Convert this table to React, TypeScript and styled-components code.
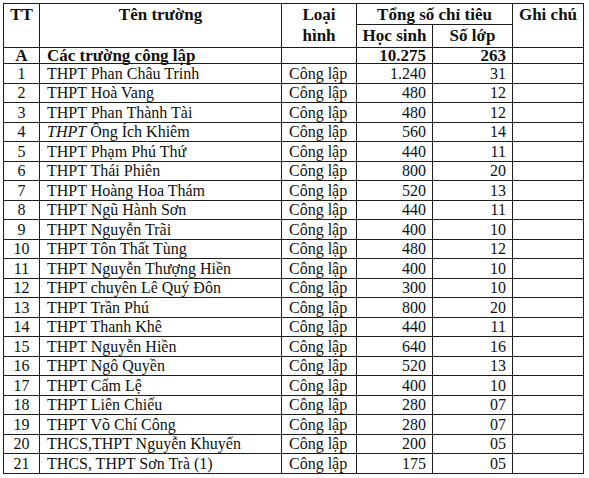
import React from "react";
import styled, { createGlobalStyle } from "styled-components";

type School = {
  no: string;
  name: React.ReactNode;
  students: string;
  classes: string;
};

const schools: School[] = [
  { no: "1", name: "THPT Phan Châu Trinh", students: "1.240", classes: "31" },
  { no: "2", name: "THPT Hoà Vang", students: "480", classes: "12" },
  { no: "3", name: "THPT Phan Thành Tài", students: "480", classes: "12" },
  { no: "4", name: <><i>THPT</i> Ông Ích Khiêm</>, students: "560", classes: "14" },
  { no: "5", name: "THPT Phạm Phú Thứ", students: "440", classes: "11" },
  { no: "6", name: "THPT Thái Phiên", students: "800", classes: "20" },
  { no: "7", name: "THPT Hoàng Hoa Thám", students: "520", classes: "13" },
  { no: "8", name: "THPT Ngũ Hành Sơn", students: "440", classes: "11" },
  { no: "9", name: "THPT Nguyễn Trãi", students: "400", classes: "10" },
  { no: "10", name: "THPT Tôn Thất Tùng", students: "480", classes: "12" },
  { no: "11", name: "THPT Nguyễn Thượng Hiền", students: "400", classes: "10" },
  { no: "12", name: "THPT chuyên Lê Quý Đôn", students: "300", classes: "10" },
  { no: "13", name: "THPT Trần Phú", students: "800", classes: "20" },
  { no: "14", name: "THPT Thanh Khê", students: "440", classes: "11" },
  { no: "15", name: "THPT Nguyễn Hiền", students: "640", classes: "16" },
  { no: "16", name: "THPT Ngô Quyền", students: "520", classes: "13" },
  { no: "17", name: "THPT Cẩm Lệ", students: "400", classes: "10" },
  { no: "18", name: "THPT Liên Chiểu", students: "280", classes: "07" },
  { no: "19", name: "THPT Võ Chí Công", students: "280", classes: "07" },
  { no: "20", name: "THCS,THPT Nguyễn Khuyến", students: "200", classes: "05" },
  { no: "21", name: "THCS, THPT Sơn Trà (1)", students: "175", classes: "05" },
];

export const App: React.FC = () => {
  return (
    <>
      <GlobalStyle />
      <Page>
        <Grid>
          <Head $rows="1 / 3">TT</Head>
          <Head $rows="1 / 3">Tên trường</Head>
          <Head $rows="1 / 3">
            Loại
            <br />
            hình
          </Head>
          <Head $cols="4 / 6">Tổng số chỉ tiêu</Head>
          <Head $rows="1 / 3" $cols="6">
            Ghi chú
          </Head>
          <Head $cols="4">Học sinh</Head>
          <Head $cols="5">Số lớp</Head>

          <Cell $align="center" $bold>
            <span>A</span>
          </Cell>
          <Cell $bold>
            <span>Các trường công lập</span>
          </Cell>
          <Cell />
          <Cell $align="right" $bold>
            <span>10.275</span>
          </Cell>
          <Cell $align="right" $bold>
            <span>263</span>
          </Cell>
          <Cell />

          {schools.map((s) => (
            <React.Fragment key={s.no}>
              <Cell $align="center">
                <span>{s.no}</span>
              </Cell>
              <Cell>
                <span>{s.name}</span>
              </Cell>
              <Cell>
                <span>Công lập</span>
              </Cell>
              <Cell $align="right">
                <span>{s.students}</span>
              </Cell>
              <Cell $align="right">
                <span>{s.classes}</span>
              </Cell>
              <Cell />
            </React.Fragment>
          ))}
        </Grid>
      </Page>
    </>
  );
};

const GlobalStyle = createGlobalStyle`
  html, body {
    margin: 0;
    padding: 0;
    background: #fff;
  }
  body {
    font-family: "Liberation Serif", "Times New Roman", serif;
    color: #111;
  }
`;

const Page = styled.div`
  width: 589px;
  height: 478px;
  padding: 3px 0 0 3px;
  box-sizing: border-box;
  background: #fff;
`;

const Grid = styled.div`
  display: grid;
  grid-template-columns: 36px 242px 75px 76px 80px 71px;
  grid-template-rows: 21px 23px 16px repeat(21, 19.5px);
  width: max-content;
  border-top: 1px solid #1e1e1e;
  border-left: 1px solid #1e1e1e;
  font-size: 16px;
`;

const Head = styled.div<{ $rows?: string; $cols?: string }>`
  grid-row: ${(p) => p.$rows ?? "auto"};
  grid-column: ${(p) => p.$cols ?? "auto"};
  border-right: 1px solid #1e1e1e;
  border-bottom: 1px solid #1e1e1e;
  font-size: 17px;
  font-weight: bold;
  text-align: center;
  line-height: 21px;
  white-space: nowrap;
`;

const Cell = styled.div<{ $align?: "left" | "center" | "right"; $bold?: boolean }>`
  display: flex;
  align-items: center;
  justify-content: ${(p) =>
    p.$align === "center" ? "center" : p.$align === "right" ? "flex-end" : "flex-start"};
  padding: ${(p) => (p.$align === "right" ? "0 6px 0 0" : p.$align === "center" ? "0" : "0 0 0 7px")};
  border-right: 1px solid #1e1e1e;
  border-bottom: 1px solid #1e1e1e;
  font-size: ${(p) => (p.$bold ? "17px" : "16px")};
  font-weight: ${(p) => (p.$bold ? "bold" : "normal")};
  white-space: nowrap;
  line-height: 15px;
`;

export default App;
